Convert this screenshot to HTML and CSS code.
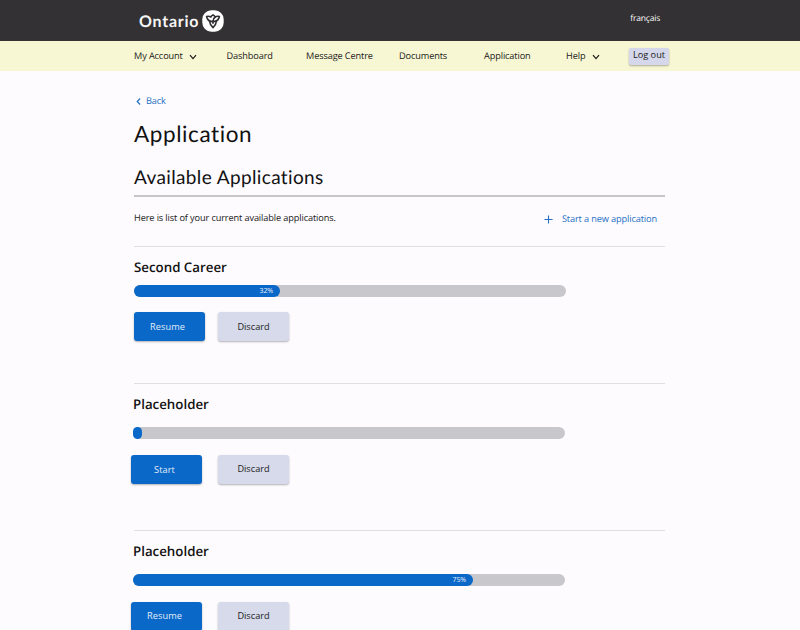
FILE: index.html
```html
<!DOCTYPE html>
<html lang="en">
<head>
<meta charset="utf-8">
<title>Application - Ontario</title>
<link rel="stylesheet" href="styles.css">
</head>
<body>
<header class="topbar">
  <div class="brand">
    <span class="brand-name">Ontario</span>
    <svg class="trillium" viewBox="0 0 22 22" aria-hidden="true">
      <rect x="0.3" y="0.3" width="21.4" height="21.4" rx="9" fill="#fff"/>
      <g fill="none" stroke="#302e30" stroke-width="1.6" stroke-linejoin="round" stroke-linecap="round">
        <path d="M10.4 11.6C7.4 11.4 5.2 9.6 4.6 6.5C6.2 6.1 7.6 6.3 8.8 7C9.4 6 10.1 5.4 11 4.9C11.9 5.4 12.6 6 13.2 7C14.4 6.3 15.8 6.1 17.4 6.5C16.8 9.6 14.6 11.4 11.6 11.6"/>
        <path d="M13.2 7C11.8 8 11 9.6 11 11.2"/>
        <path d="M7.6 11.2C7.8 13.8 9 15.9 11 17.6C13 15.9 14.2 13.8 14.4 11.2M11 11.4V13.2"/>
      </g>
    </svg>
  </div>
  <a class="language">français</a>
</header>
<nav class="menu">
  <a>My Account <svg class="chevron" viewBox="0 0 8 6"><path d="M1 1.2L4 4.6L7 1.2"/></svg></a>
  <a>Dashboard</a>
  <a>Message Centre</a>
  <a>Documents</a>
  <a>Application</a>
  <a>Help <svg class="chevron help" viewBox="0 0 8 6"><path d="M1 1.2L4 4.6L7 1.2"/></svg></a>
  <button class="logout">Log out</button>
</nav>
<main class="page">
  <a class="back"><svg viewBox="0 0 5 7"><path d="M4.1 .5L1.2 3.5L4.1 6.5"/></svg>Back</a>
  <h1>Application</h1>
  <h2>Available Applications</h2>
  <div class="intro">
    <p>Here is list of your current available applications.</p>
    <a class="new"><svg viewBox="0 0 10 10"><path d="M5 .5V9.5M.5 5H9.5"/></svg>Start a new application</a>
  </div>
  <section class="item first">
    <h3>Second Career</h3>
    <div class="track"><div class="fill" style="width:146px">32%</div></div>
    <div class="actions"><button class="btn primary">Resume</button><button class="btn">Discard</button></div>
  </section>
  <section class="item second">
    <h3>Placeholder</h3>
    <div class="track"><div class="fill empty" style="width:9px"></div></div>
    <div class="actions"><button class="btn primary start">Start</button><button class="btn">Discard</button></div>
  </section>
  <section class="item third">
    <h3>Placeholder</h3>
    <div class="track"><div class="fill" style="width:340px">75%</div></div>
    <div class="actions"><button class="btn primary">Resume</button><button class="btn">Discard</button></div>
  </section>
</main>
</body>
</html>
```
FILE: styles.css
```css
* { box-sizing: border-box; }
html, body { height: 630px; overflow: hidden; }
body { margin: 0; background: #fdfbfe; color: #1a1a1a; font: 9.2px/14px "Open Sans", "Noto Sans", sans-serif; letter-spacing: -.12px; text-rendering: geometricPrecision; }
button { font: inherit; letter-spacing: inherit; border: 0; padding: 0; white-space: nowrap; }
svg { display: block; fill: none; stroke: currentColor; flex: none; }
h1, h2, h3, p { margin: 0; white-space: nowrap; }

.topbar { height: 41px; background: #333133; color: #fff; display: flex; justify-content: space-between; padding: 0 140px 0 139px; }
.brand { display: flex; align-items: center; height: 41px; gap: 2px; }
.brand-name { width: 61px; font: 700 16px/24px Lato, sans-serif; letter-spacing: .75px; color: #f6f6f6; padding-top: 2px; }
.trillium { width: 22px; height: 22px; stroke: none; }
.language { font-size: 8.5px; line-height: 12px; padding-top: 13px; letter-spacing: -.2px; }

.menu { height: 30px; background: #f8f7d4; display: grid; grid-template-columns: 92.5px 79.5px 93px 85px 82px 63px 40px; padding-left: 134px; align-items: center; }
.menu a { display: flex; align-items: center; gap: 6px; white-space: nowrap; }
.chevron { width: 8px; height: 6px; stroke-width: 1.2; margin-top: 2px; }
.help { margin-left: 1px; }
.logout { height: 17px; line-height: 13px; padding-bottom: 3px; background: #d4d8ea; border-radius: 2px; color: #1a1a1a; letter-spacing: 0; box-shadow: 0 1px 2px rgba(0,0,0,.3); }

.page { width: 531px; margin-left: 134px; }
.back { display: flex; align-items: center; gap: 5px; height: 14px; margin-top: 23px; padding-left: 2px; color: #2670c4; }
.back svg { width: 5px; height: 7px; stroke-width: 1.2; }
h1 { font: 400 22.5px/30px Lato, sans-serif; margin-top: 11px; color: #111; letter-spacing: .6px; }
h2 { font: 400 19px/24px Lato, sans-serif; margin-top: 17px; height: 31px; border-bottom: 2px solid #c6c5c7; color: #111; letter-spacing: .37px; }
.intro { height: 49px; display: flex; justify-content: space-between; padding: 14px 8px 0 0; }
.new { display: flex; align-items: center; gap: 9px; height: 16px; color: #2670c4; }
.new svg { width: 9px; height: 9px; stroke-width: 1.2; }

.item { border-top: 1px solid #e0dfe1; }
.first { height: 137px; }
.second { height: 147px; }
.third { height: 100px; }
h3 { font-size: 13.3px; font-weight: 600; line-height: 18px; margin-top: 11px; color: #111; letter-spacing: 0; }
.track { width: 432px; height: 12px; border-radius: 6px; background: #c8c7cb; margin-top: 9px; }
.fill { height: 12px; border-radius: 6px; background: #0a68c8; color: #e7f0fb; font-size: 7px; letter-spacing: -.1px; line-height: 13px; text-align: right; padding-right: 7px; }
.empty { border-radius: 5px; padding: 0; }
.actions { display: flex; gap: 13px; margin-top: 15px; }
.btn { width: 71px; height: 29px; border-radius: 3px; background: #d6daea; color: #222; letter-spacing: 0; box-shadow: 0 1px 2px rgba(0,0,0,.3); }
.primary { background: #0a68c8; color: #e2edfa; padding-right: 4px; letter-spacing: .1px; }
.second h3, .second .track, .third h3, .third .track { margin-left: -1px; }
.second .track, .third .track { margin-top: 14px; }
.second .actions, .third .actions { margin-top: 16px; margin-left: -3px; gap: 16px; }
.second .btn, .third .btn { padding-bottom: 1px; }
.start { padding-top: 2px; }
```
